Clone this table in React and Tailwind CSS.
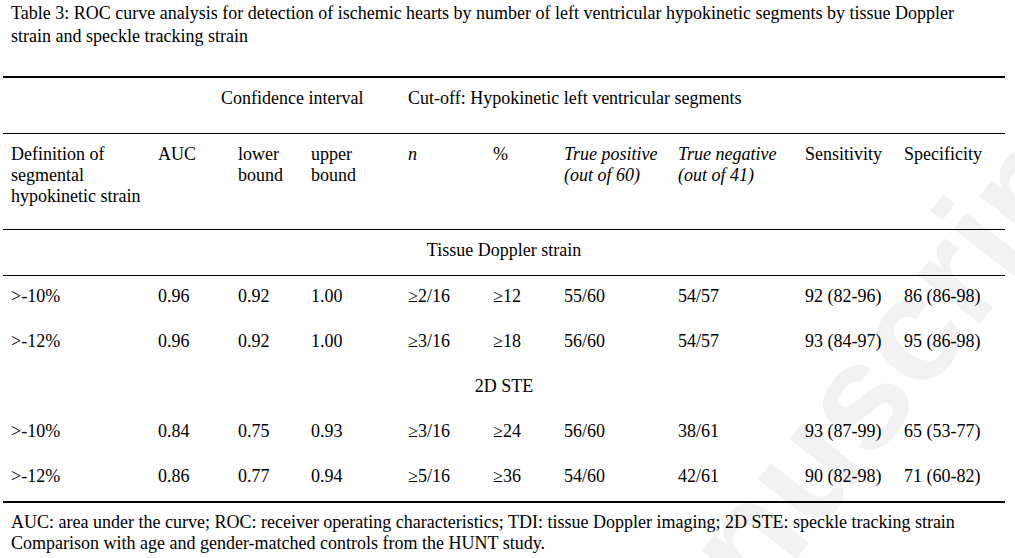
import React from 'react'

// column widths (px) measured from the table grid
const cols = ['w-[147px]', 'w-[80px]', 'w-[73px]', 'w-[97px]', 'w-[85px]', 'w-[71px]', 'w-[114px]', 'w-[127px]', 'w-[99px]', 'w-[109px]']

const rows = [
  { section: 'Tissue Doppler strain' },
  { cells: ['>-10%', '0.96', '0.92', '1.00', '≥2/16', '≥12', '55/60', '54/57', '92 (82-96)', '86 (86-98)'] },
  { cells: ['>-12%', '0.96', '0.92', '1.00', '≥3/16', '≥18', '56/60', '54/57', '93 (84-97)', '95 (86-98)'] },
  { section: '2D STE', plain: true },
  { cells: ['>-10%', '0.84', '0.75', '0.93', '≥3/16', '≥24', '56/60', '38/61', '93 (87-99)', '65 (53-77)'] },
  { cells: ['>-12%', '0.86', '0.77', '0.94', '≥5/16', '≥36', '54/60', '42/61', '90 (82-98)', '71 (60-82)'] },
]

function Cell({ i, children, italic }) {
  return (
    <div className={`${cols[i]} shrink-0 pl-2 ${italic ? 'italic' : ''}`}>{children}</div>
  )
}

export default function App() {
  return (
    <div
      className="relative w-[1015px] h-[558px] overflow-hidden bg-white text-black text-[18px] leading-[21px]"
      style={{ fontFamily: '"Liberation Serif", "Times New Roman", serif' }}
    >
      {/* faint watermark behind the table */}
      <div
        className="absolute left-[589px] top-[665px] whitespace-nowrap text-[150px] leading-none font-bold text-[#f2f2f2] origin-left -rotate-[52deg] pointer-events-none select-none"
        style={{ fontFamily: '"Liberation Sans", Arial, sans-serif' }}
      >
        Manuscript
      </div>

      <div className="relative">
        <p className="pl-[11px] pt-[2px] pr-[40px] leading-[23px]">
          Table 3: ROC curve analysis for detection of ischemic hearts by number of left ventricular hypokinetic segments by tissue Doppler
          strain and speckle tracking strain
        </p>

        <div className="ml-[3px] w-[1002px] mt-[28px] border-t-2 border-black">
          {/* group header */}
          <div className="flex h-[56px] pt-[10px] border-b border-black">
            <div className="w-[210px] shrink-0" />
            <div className="w-[187px] shrink-0 pl-2">Confidence interval</div>
            <div className="flex-1 pl-2">Cut-off: Hypokinetic left ventricular segments</div>
          </div>

          {/* column header */}
          <div className="flex h-[96px] pt-[10px] border-b border-black">
            <Cell i={0}>Definition of segmental hypokinetic strain</Cell>
            <Cell i={1}>AUC</Cell>
            <Cell i={2}>lower bound</Cell>
            <Cell i={3}>upper bound</Cell>
            <Cell i={4} italic>n</Cell>
            <Cell i={5}>%</Cell>
            <Cell i={6} italic>True positive (out of 60)</Cell>
            <Cell i={7} italic>True negative (out of 41)</Cell>
            <Cell i={8}>Sensitivity</Cell>
            <Cell i={9}>Specificity</Cell>
          </div>

          {rows.map((r, idx) =>
            r.section ? (
              <div
                key={idx}
                className={`pt-[10px] text-center ${r.plain ? 'h-[45px]' : 'h-[46px] border-b border-black'}`}
              >
                {r.section}
              </div>
            ) : (
              <div key={idx} className="flex h-[45px] pt-[10px]">
                {r.cells.map((c, i) => (
                  <Cell key={i} i={i}>{c}</Cell>
                ))}
              </div>
            )
          )}

          <div className="border-t-2 border-black" />
        </div>

        <div className="pl-[11px] pt-[9px]">
          <p>AUC: area under the curve; ROC: receiver operating characteristics; TDI: tissue Doppler imaging; 2D STE: speckle tracking strain</p>
          <p>Comparison with age and gender-matched controls from the HUNT study.</p>
        </div>
      </div>
    </div>
  )
}
